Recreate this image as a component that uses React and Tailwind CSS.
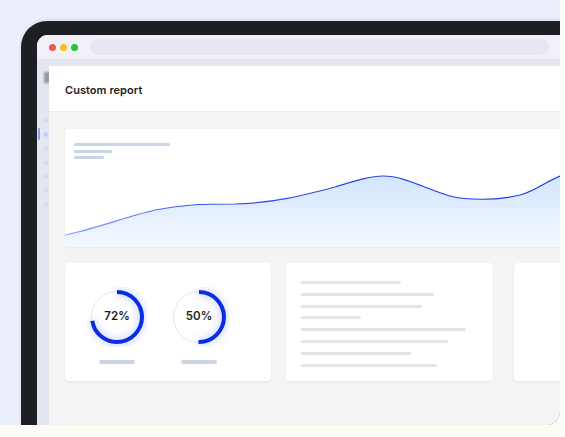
import React from "react";

function Donut({ pct }) {
  const r = 25;
  const c = 2 * Math.PI * r;
  return (
    <div className="flex flex-col items-center">
      <div className="relative w-[60px] h-[60px]">
        <svg width="60" height="60" viewBox="0 0 60 60" className="block">
          <circle cx="30" cy="30" r="25.5" fill="none" stroke="#e9e9ec" strokeWidth="1" />
          <circle
            cx="30"
            cy="30"
            r={r}
            fill="none"
            stroke="#0a2ce6"
            strokeWidth="4"
            strokeDasharray={`${(c * pct) / 100} ${c}`}
            transform="rotate(-90 30 30)"
            className="drop-shadow-[0_0_4px_rgba(40,80,255,0.4)]"
          />
        </svg>
        <div className="absolute inset-0 flex items-center justify-center text-[11.5px] font-semibold text-[#1d1d21] tracking-[0.1px]">
          {pct}%
        </div>
      </div>
      <div className="mt-[13px] w-[36px] h-[3.5px] rounded-full bg-[#c9d5e6]" />
    </div>
  );
}

function Chart() {
  const line =
    "M0,106 C30,100 60,88 90,81 C120,75 140,75 170,75 C210,74 240,66 270,58 C290,52 305,47 318,47 C340,47 360,60 385,67 C400,71 430,72 455,66 C470,62 480,53 495,47 L520,42";
  return (
    <svg width="520" height="118" viewBox="0 0 520 118" className="absolute left-0 top-0">
      <defs>
        <linearGradient id="fillg" x1="0" y1="0" x2="0" y2="1">
          <stop offset="0%" stopColor="#d2e4ff" />
          <stop offset="100%" stopColor="#f3f8ff" />
        </linearGradient>
        <linearGradient id="lineg" x1="0" y1="0" x2="1" y2="0">
          <stop offset="0%" stopColor="#9aa9f2" />
          <stop offset="25%" stopColor="#3b55e6" />
          <stop offset="100%" stopColor="#1a36e3" />
        </linearGradient>
      </defs>
      <path d={`${line} L520,118 L0,118 Z`} fill="url(#fillg)" />
      <path d={line} fill="none" stroke="url(#lineg)" strokeWidth="1.2" />
    </svg>
  );
}

const textLines = [100, 133, 121, 60, 165, 147, 110, 136];

export default function App() {
  return (
    <div
      className="w-[565px] h-[437px] bg-[#fcfbf6] overflow-hidden"
      style={{ fontFamily: "Inter, 'Noto Sans', sans-serif" }}
    >
      <div className="w-[560px] h-[425px] bg-[#ebeffa] rounded-br-[14px] overflow-hidden pt-[21px] pl-[21px] flex">
        <div className="flex-1 bg-[#1e1f24] rounded-tl-[26px] pt-[14px] pl-[16px] flex shadow-[0_-1px_4px_rgba(0,0,0,0.08)]">
          <div className="flex-1 rounded-tl-[11px] overflow-hidden bg-[#e3e7f1] flex flex-col">
            {/* browser chrome */}
            <div className="h-[24px] shrink-0 bg-[#f2f1f8] flex items-center pl-[11.5px]">
              <div className="flex gap-[4px]">
                <div className="w-[7px] h-[7px] rounded-full bg-[#f25656]" />
                <div className="w-[7px] h-[7px] rounded-full bg-[#f4c01c]" />
                <div className="w-[7px] h-[7px] rounded-full bg-[#27c13b]" />
              </div>
              <div className="ml-[12.5px] w-[459px] h-[16px] rounded-full bg-[#e8e6f3]" />
            </div>
            {/* body */}
            <div className="flex flex-1 min-h-0">
              {/* sidebar */}
              <div className="relative w-[12px] shrink-0 overflow-hidden flex flex-col pl-[7px]">
                <div className="mt-[13px] w-[6px] h-[11px] bg-[#9496a0] blur-[1px]" />
                <div className="mt-[36px] flex flex-col gap-[11px]">
                  {[0, 1, 2, 3, 4, 5, 6].map((i) => (
                    <div
                      key={i}
                      className={
                        i === 1
                          ? "w-[4px] h-[3px] rounded-full bg-[#a8b4ef] blur-[0.8px]"
                          : "w-[4px] h-[3px] rounded-full bg-[#cdd1dc] blur-[0.8px]"
                      }
                    />
                  ))}
                </div>
                <div className="absolute left-[1px] top-[69px] w-[1.5px] h-[12px] rounded-full bg-[#8c9df3] blur-[0.4px]" />
              </div>
              {/* main */}
              <div className="flex-1 mt-[7px] flex flex-col bg-[#f4f4f4] overflow-hidden">
                <div className="h-[46px] shrink-0 bg-white border-b border-[#ececec] pl-[16px] pt-[3px] flex items-center">
                  <span className="text-[11px] font-semibold text-[#1f2024] tracking-[0.05px]">
                    Custom report
                  </span>
                </div>
                <div className="pl-[16px] pt-[17px] flex flex-col gap-[16px]">
                  {/* chart card */}
                  <div className="relative w-[520px] h-[118px] shrink-0 bg-white rounded-[4px] overflow-hidden shadow-[0_1px_2px_rgba(0,0,0,0.06)]">
                    <Chart />
                    <div className="relative pl-[9px] pt-[14px] flex flex-col gap-[3.5px]">
                      <div className="w-[96px] h-[3px] rounded-full bg-[#c9d5e6]" />
                      <div className="w-[38px] h-[3px] rounded-full bg-[#c9d5e6]" />
                      <div className="w-[30px] h-[3px] rounded-full bg-[#c9d5e6]" />
                    </div>
                  </div>
                  {/* bottom cards */}
                  <div className="flex shrink-0">
                    <div className="w-[206px] h-[118px] shrink-0 bg-white rounded-[4px] shadow-[0_1px_2px_rgba(0,0,0,0.06)] flex items-start pl-[22px] pt-[24px] gap-[22px]">
                      <Donut pct={72} />
                      <Donut pct={50} />
                    </div>
                    <div className="ml-[15px] w-[207px] h-[118px] shrink-0 bg-white rounded-[4px] shadow-[0_1px_2px_rgba(0,0,0,0.06)] flex flex-col pl-[15px] pt-[18px] gap-[8.8px]">
                      {textLines.map((w, i) => (
                        <div
                          key={i}
                          className="h-[3px] rounded-full bg-[#e4e4e4]"
                          style={{ width: `${w}px` }}
                        />
                      ))}
                    </div>
                    <div className="ml-[21px] w-[100px] h-[118px] shrink-0 bg-white rounded-[4px] shadow-[0_1px_2px_rgba(0,0,0,0.06)]" />
                  </div>
                </div>
              </div>
            </div>
          </div>
        </div>
      </div>
    </div>
  );
}
